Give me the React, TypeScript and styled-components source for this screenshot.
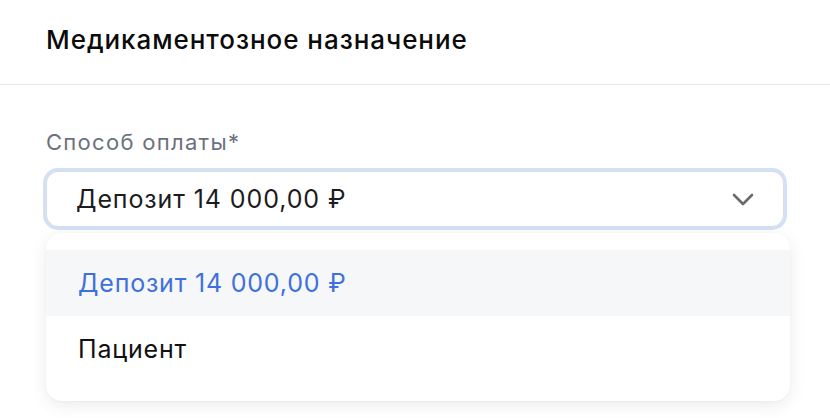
import React from "react";
import styled, { createGlobalStyle } from "styled-components";

const GlobalStyle = createGlobalStyle`
  html, body {
    margin: 0;
    padding: 0;
    background: #ffffff;
    font-family: "Inter", "Liberation Sans", "Noto Sans", sans-serif;
    -webkit-font-smoothing: antialiased;
  }
  * { box-sizing: border-box; }
`;

const Page = styled.div`
  width: 830px;
  height: 418px;
  overflow: hidden;
  background: #ffffff;
`;

const Header = styled.header`
  height: 85px;
  display: flex;
  align-items: center;
  padding: 0 46px 6px;
  border-bottom: 1px solid #e9e9ee;
`;

const Title = styled.h1`
  margin: 0;
  font-size: 26px;
  font-weight: 500;
  color: #0b0b0b;
  letter-spacing: 0.95px;
`;

const Body = styled.div`
  padding: 44px 46px 0;
`;

const Field = styled.div`
  position: relative;
  width: 738px;
`;

const Label = styled.div`
  font-size: 22px;
  color: #6b717e;
  margin-bottom: 15px;
  line-height: 27px;
  letter-spacing: 1.3px;
`;

const SelectBox = styled.div<{ $open: boolean }>`
  height: 56px;
  display: flex;
  align-items: center;
  justify-content: space-between;
  padding: 0 29px 0 29px;
  border: 1px solid #dcdde3;
  border-radius: 12px;
  background: #ffffff;
  box-shadow: ${p => (p.$open ? "0 0 0 3px #d3e1f8" : "none")};
  font-size: 25px;
  letter-spacing: 0.9px;
  color: #1c1c1e;
`;

const Chevron = () => (
  <svg width="22" height="13" viewBox="0 0 22 13" fill="none">
    <path
      d="M2 2L11 11L20 2"
      stroke="#6a6a6e"
      strokeWidth="2.6"
      strokeLinecap="round"
      strokeLinejoin="round"
    />
  </svg>
);

const Menu = styled.ul`
  position: absolute;
  left: 0;
  top: 104px;
  width: 744px;
  margin: 0;
  padding: 17px 0 19px;
  list-style: none;
  background: #ffffff;
  border-radius: 16px;
  box-shadow: 0 4px 18px rgba(0, 0, 0, 0.08), 0 1px 3px rgba(0, 0, 0, 0.03);
`;

const Option = styled.li<{ $active?: boolean }>`
  height: 66px;
  display: flex;
  align-items: center;
  padding: 0 32px;
  font-size: 25px;
  letter-spacing: 0.8px;
  color: ${p => (p.$active ? "#4070dc" : "#111111")};
  background: ${p => (p.$active ? "#f6f7f9" : "transparent")};
`;

const options = ["Депозит 14 000,00 ₽", "Пациент"];

export default function App() {
  const selected = options[0];
  return (
    <Page>
      <GlobalStyle />
      <Header>
        <Title>Медикаментозное назначение</Title>
      </Header>
      <Body>
        <Field>
          <Label>Способ оплаты*</Label>
          <SelectBox $open>
            <span>{selected}</span>
            <Chevron />
          </SelectBox>
          <Menu>
            {options.map(o => (
              <Option key={o} $active={o === selected}>
                {o}
              </Option>
            ))}
          </Menu>
        </Field>
      </Body>
    </Page>
  );
}
